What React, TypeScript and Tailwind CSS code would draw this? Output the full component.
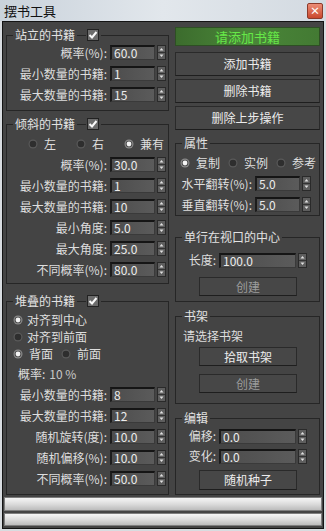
import React from "react";

function Spinner({ className = "" }: { className?: string }) {
  return (
    <svg className={"block shrink-0 " + className} width="9" height="15" viewBox="0 0 9 15">
      <rect x="0" y="0" width="9" height="15" fill="#5e5e5e" />
      <rect x="0.5" y="0.5" width="8" height="14" fill="none" stroke="#2a2a2a" />
      <line x1="1" y1="7.5" x2="8" y2="7.5" stroke="#333" />
      <polygon points="2.5,5.5 6.5,5.5 4.5,3" fill="#e0e0e0" />
      <polygon points="2.5,9.5 6.5,9.5 4.5,12" fill="#e0e0e0" />
    </svg>
  );
}

function Field({ value, className = "" }: { value: string; className?: string }) {
  return (
    <div
      className={
        "flex h-[15px] shrink-0 items-center border-t-2 border-l-2 border-r border-b border-t-[#151515] border-l-[#1c1c1c] border-r-[#3a3a3a] border-b-[#3a3a3a] bg-linear-to-r from-[#4d4d4d] to-[#5b5b5b] pl-[2px] text-[12px] leading-none text-[#ececec] " +
        className
      }
    >
      {value}
    </div>
  );
}

function Radio({ on = false }: { on?: boolean }) {
  return (
    <svg className="block shrink-0" width="10" height="10" viewBox="0 0 10 10">
      <circle cx="5" cy="5" r="4.5" fill={on ? "#8a8a8a" : "#5a5a5a"} />
      <circle cx="5" cy="5" r="3.3" fill={on ? "#4a4a4a" : "#2e2e2e"} />
      {on && <circle cx="5" cy="5" r="2.4" fill="#f4f4f4" />}
    </svg>
  );
}

function Check() {
  return (
    <svg className="block shrink-0" width="12" height="12" viewBox="0 0 12 12">
      <rect x="0.5" y="0.5" width="11" height="11" fill="#6c6c6c" stroke="#222" />
      <path d="M2.5 6 L5 8.5 L9.5 3" fill="none" stroke="#fafafa" strokeWidth="2" />
    </svg>
  );
}

function Group({
  title,
  check = false,
  className = "",
  children,
}: {
  title: string;
  check?: boolean;
  className?: string;
  children: React.ReactNode;
}) {
  return (
    <fieldset className={"border border-[#262626] px-0 " + className}>
      <legend className="ml-[6px] flex h-[14px] items-center px-[2px] text-[12px] leading-none text-[#e2e2e2]">
        <span>{title}</span>
        {check && (
          <>
            <span className="ml-[2px] h-px w-[9px] bg-[#262626]" />
            <span className="ml-[1px]">
              <Check />
            </span>
          </>
        )}
      </legend>
      {children}
    </fieldset>
  );
}

function LRow({ label, value }: { label: string; value: string }) {
  return (
    <div className="flex h-[21px] items-center justify-end pr-[2px]">
      <span>{label}</span>
      <Field value={value} className="ml-[3px] w-[45px]" />
      <Spinner className="ml-[2px]" />
    </div>
  );
}

function Btn({
  children,
  dim = false,
  className = "",
}: {
  children: React.ReactNode;
  dim?: boolean;
  className?: string;
}) {
  return (
    <div
      className={
        "flex items-center justify-center border border-[#2a2a2a] border-b-[#1e1e1e] bg-[#474747] text-[12px] leading-none " +
        (dim ? "text-[#9c9c9c] " : "text-[#ececec] ") +
        className
      }
    >
      {children}
    </div>
  );
}

export default function App() {
  return (
    <div className="flex h-[531px] w-[326px] flex-col bg-[#d8dce0] font-['Noto_Sans_CJK_SC','Noto_Sans',sans-serif] text-[12px] text-[#dedede]">
      {/* title bar */}
      <div className="flex h-[21px] shrink-0 items-center bg-linear-to-r from-[#c9d2db] via-[#e2e7ec] to-[#d3dae1] pl-[4px] pr-[3px]">
        <span className="text-[13px] leading-none text-[#111]">摆书工具</span>
        <div className="ml-auto flex h-[16px] w-[16px] items-center justify-center rounded-[2px] border border-[#8c3a2a] bg-linear-to-b from-[#ec8c76] to-[#c9472c] text-[10px] font-bold leading-none text-white">
          ×
        </div>
      </div>

      <div className="flex flex-1 flex-col px-[2px] pb-[2px]">
        <div className="flex flex-1 flex-col border border-[#141414] bg-[#444444]">
          <div className="flex pl-[3px]">
            {/* left column */}
            <div className="flex w-[163px] flex-col">
              <Group title="站立的书籍" check className="mt-[6px] pb-[5px]">
                <LRow label="概率(%):" value="60.0" />
                <LRow label="最小数量的书籍:" value="1" />
                <LRow label="最大数量的书籍:" value="15" />
              </Group>

              <Group title="倾斜的书籍" check className="mt-[6px] pb-[3px]">
                <div className="mt-[3px] flex h-[20px] items-center pl-[21px]">
                  <Radio />
                  <span className="ml-[6px]">左</span>
                  <span className="ml-[20px]">
                    <Radio />
                  </span>
                  <span className="ml-[6px]">右</span>
                  <span className="ml-[20px]">
                    <Radio on />
                  </span>
                  <span className="ml-[6px]">兼有</span>
                </div>
                <LRow label="概率(%):" value="30.0" />
                <LRow label="最小数量的书籍:" value="1" />
                <LRow label="最大数量的书籍:" value="10" />
                <LRow label="最小角度:" value="5.0" />
                <LRow label="最大角度:" value="25.0" />
                <LRow label="不同概率(%):" value="80.0" />
              </Group>

              <Group title="堆叠的书籍" check className="mt-[10px] pb-[5px]">
                <div className="mt-[3px] flex h-[17px] items-center pl-[6px]">
                  <Radio on />
                  <span className="ml-[4px]">对齐到中心</span>
                </div>
                <div className="flex h-[17px] items-center pl-[6px]">
                  <Radio />
                  <span className="ml-[4px]">对齐到前面</span>
                </div>
                <div className="flex h-[18px] items-center pl-[6px]">
                  <Radio on />
                  <span className="ml-[6px]">背面</span>
                  <span className="ml-[8px]">
                    <Radio />
                  </span>
                  <span className="ml-[6px]">前面</span>
                </div>
                <div className="flex h-[21px] items-center pl-[11px]">
                  <span>概率:</span>
                  <span className="ml-[4px] text-[#c8c8c8]">10 %</span>
                </div>
                <LRow label="最小数量的书籍:" value="8" />
                <LRow label="最大数量的书籍:" value="12" />
                <LRow label="随机旋转(度):" value="10.0" />
                <LRow label="随机偏移(%):" value="10.0" />
                <LRow label="不同概率(%):" value="50.0" />
              </Group>
            </div>

            {/* right column */}
            <div className="ml-[6px] flex w-[145px] flex-col">
              <div className="mt-[5px] flex h-[19px] items-center justify-center border border-[#2e4f24] bg-linear-to-r from-[#3c6c2d] via-[#4a8639] to-[#437a33] text-[13px] leading-none text-[#66e848]">
                请添加书籍
              </div>
              <Btn className="mt-[6px] h-[24px]">添加书籍</Btn>
              <Btn className="mt-[3px] h-[24px]">删除书籍</Btn>
              <Btn className="mt-[3px] h-[24px]">删除上步操作</Btn>

              <Group title="属性" className="mt-[6px]">
                <div className="mt-[2px] flex h-[21px] items-center pl-[4px]">
                  <Radio on />
                  <span className="ml-[6px]">复制</span>
                  <span className="ml-[8px]">
                    <Radio />
                  </span>
                  <span className="ml-[6px]">实例</span>
                  <span className="ml-[8px]">
                    <Radio />
                  </span>
                  <span className="ml-[6px]">参考</span>
                </div>
                <div className="flex h-[21px] items-center">
                  <span className="w-[76px] text-right">水平翻转(%):</span>
                  <Field value="5.0" className="ml-[3px] w-[45px]" />
                  <Spinner className="ml-[2px]" />
                </div>
                <div className="flex h-[21px] items-center">
                  <span className="w-[76px] text-right">垂直翻转(%):</span>
                  <Field value="5.0" className="ml-[3px] w-[45px]" />
                  <Spinner className="ml-[2px]" />
                </div>
              </Group>

              <Group title="单行在视口的中心" className="mt-[14px] pb-[5px]">
                <div className="mt-[6px] flex h-[20px] items-center">
                  <span className="w-[40px] text-right">长度:</span>
                  <Field value="100.0" className="ml-[3px] w-[77px]" />
                  <Spinner className="ml-[2px]" />
                </div>
                <Btn dim className="ml-[23px] mt-[7px] h-[19px] w-[98px]">
                  创建
                </Btn>
              </Group>

              <Group title="书架" className="mt-[7px] pb-[10px]">
                <div className="mt-[3px] flex h-[20px] items-center pl-[7px]">请选择书架</div>
                <Btn className="ml-[23px] mt-[1px] h-[19px] w-[98px]">拾取书架</Btn>
                <Btn dim className="ml-[23px] mt-[8px] h-[19px] w-[98px]">
                  创建
                </Btn>
              </Group>

              <Group title="编辑" className="mt-[7px] pb-[4px]">
                <div className="mt-[1px] flex h-[20px] items-center">
                  <span className="w-[40px] text-right">偏移:</span>
                  <Field value="0.0" className="ml-[3px] w-[77px]" />
                  <Spinner className="ml-[2px]" />
                </div>
                <div className="flex h-[20px] items-center">
                  <span className="w-[40px] text-right">变化:</span>
                  <Field value="0.0" className="ml-[3px] w-[77px]" />
                  <Spinner className="ml-[2px]" />
                </div>
                <Btn className="ml-[23px] mt-[4px] h-[20px] w-[98px]">随机种子</Btn>
              </Group>
            </div>
          </div>

          {/* progress bars */}
          <div className="mt-[2px] flex flex-col gap-[2px] px-[1px]">
            <div className="h-[14px] border border-[#7e7e7e] bg-linear-to-b from-[#f6f6f6] via-[#dcdcdc] to-[#bcbcbc]" />
            <div className="h-[13px] border border-[#7e7e7e] bg-linear-to-b from-[#f6f6f6] via-[#dcdcdc] to-[#bcbcbc]" />
          </div>
        </div>
      </div>
    </div>
  );
}
